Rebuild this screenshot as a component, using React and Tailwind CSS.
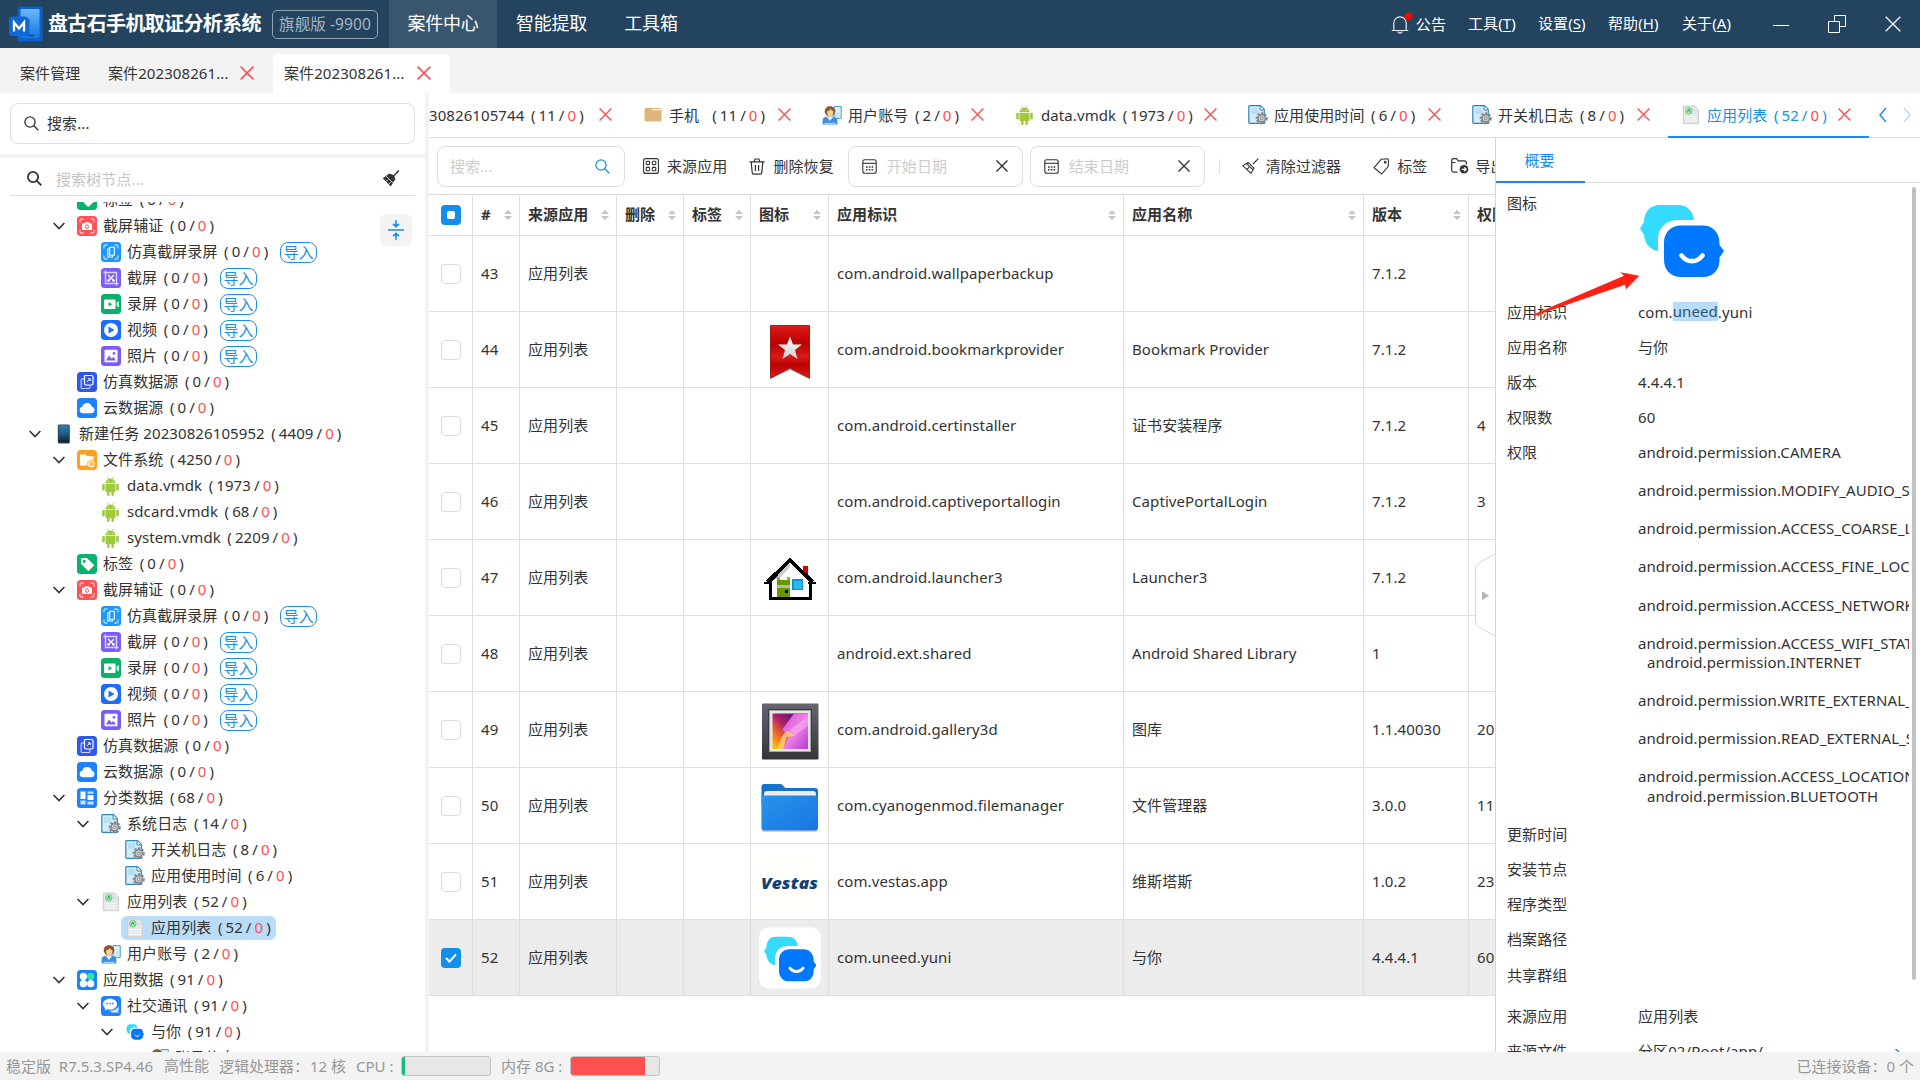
import React from "react";

/* ---------- small glyphs ---------- */

const Cross = ({ className = "", w = 14, h = 14, sw = 1.5 }) => (
  <svg className={"shrink-0 " + className} width={w} height={h} viewBox="0 0 14 14" fill="none" stroke="currentColor" strokeWidth={sw}>
    <path d="M.6.6 13.4 13.4M13.4.6.6 13.4" />
  </svg>
);

const Magnifier = ({ className = "", sw = 1.3 }) => (
  <svg className={"shrink-0 " + className} width="15" height="15" viewBox="0 0 15 15" fill="none" stroke="currentColor" strokeWidth={sw}>
    <circle cx="6" cy="6" r="5.1" />
    <path d="M9.8 9.8 14.3 14.3" />
  </svg>
);

const Chevron = () => (
  <svg className="shrink-0" width="12" height="8" viewBox="0 0 12 8" fill="none" stroke="#333" strokeWidth="1.6">
    <path d="M.6 1 6 6.6 11.4 1" />
  </svg>
);

const Calendar = () => (
  <svg className="shrink-0" width="15" height="15" viewBox="0 0 15 15" fill="none" stroke="#333" strokeWidth="1.1">
    <rect x=".8" y=".8" width="13.4" height="13.4" rx="2" />
    <path d="M.8 4.3H14.2" />
    <path d="M4 8h1.6M6.8 8h1.6M9.6 8h1.6M4 10.8h1.6M6.8 10.8h1.6M9.6 10.8h1.6" strokeWidth="1.5" />
  </svg>
);

const SourceGrid = () => (
  <svg className="shrink-0" width="16" height="16" viewBox="0 0 16 16" fill="none" stroke="#333" strokeWidth="1.1">
    <rect x=".6" y=".6" width="14.8" height="14.8" rx="2" />
    <rect x="3.2" y="3.2" width="3.4" height="3.4" rx=".8" />
    <rect x="9.4" y="3.2" width="3.4" height="3.4" rx=".8" />
    <rect x="3.2" y="9.4" width="3.4" height="3.4" rx=".8" />
    <rect x="9.4" y="9.4" width="3.4" height="3.4" rx=".8" />
  </svg>
);

const Trash = () => (
  <svg className="shrink-0" width="16" height="17" viewBox="0 0 16 17" fill="none" stroke="#333" strokeWidth="1.2">
    <path d="M.5 3.8H15.5M5.2 3.6 6 1h4l.8 2.6M2.2 4l1 10.6a1.6 1.6 0 0 0 1.6 1.5h6.4a1.6 1.6 0 0 0 1.6-1.5l1-10.6M6.4 7v6M9.6 7v6" />
  </svg>
);

const BroomLine = () => (
  <svg className="shrink-0" width="17" height="16" viewBox="0 0 17 16" fill="none" stroke="#333" strokeWidth="1.1">
    <path d="M16.3.6 11 6M6 4.4l6 5.8-3 5L.8 7.8ZM4.4 5.3l6.6 6.6M5.2 11.2 7 9.2" />
  </svg>
);

const TagLine = () => (
  <svg className="shrink-0" width="17" height="17" viewBox="0 0 17 17" fill="none" stroke="#333" strokeWidth="1.1">
    <path d="M8.2 1.3 14 .8c1 0 1.5.6 1.5 1.5l-.3 6.3L8.6 16 1 9.6Z" />
    <circle cx="12.2" cy="4.2" r=".9" />
  </svg>
);

const ExportIcon = () => (
  <svg className="shrink-0" width="18" height="16" viewBox="0 0 18 16" fill="none" stroke="#333" strokeWidth="1.2">
    <path d="M6.5 14.2H2.6A2 2 0 0 1 .7 12.300V2.500A1.800 1.800 0 0 1 2.500.700H5.600L7.200 2.800H13.500A2 2 0 0 1 15.400 4.800V6.600M1 4.500H4.500" />
    <circle cx="13" cy="11.300" r="4.300" fill="#333" stroke="none" />
    <path d="M10.700 11.300h4M13.200 9.400l2 1.900-2 1.900" stroke="#fff" />
  </svg>
);

const Sort = () => (
  <svg className="ml-auto shrink-0" width="8" height="10" viewBox="0 0 8 10" fill="#c4c4c4">
    <path d="M4 0 8 4H0ZM4 10 0 6H8Z" />
  </svg>
);

/* ---------- 20px tree icons ---------- */

const Tile = ({ color, children }) => (
  <svg className="shrink-0" width="20" height="20" viewBox="0 0 20 20" fill="none">
    <rect width="20" height="20" rx="3.5" fill={color} />
    {children}
  </svg>
);

const icons = {
  tag: (
    <Tile color="#08b26a">
      <path d="M4 4.800A.8.800 0 0 1 4.800 4H9.800L16.600 10.600a1 1 0 0 1 0 1.400L12 16.600a1 1 0 0 1-1.400 0L4 9.800Z" fill="#fff" />
      <circle cx="7.300" cy="7.300" r="1.500" fill="#08b26a" />
    </Tile>
  ),
  evidence: (
    <Tile color="#ff5257">
      <path d="M3 6.500V4.500A1.500 1.500 0 0 1 4.500 3H6.500M13.500 3h2A1.500 1.500 0 0 1 17 4.500v2M17 13.500v2a1.500 1.500 0 0 1-1.500 1.500h-2M6.500 17h-2A1.500 1.500 0 0 1 3 15.500v-2" stroke="#ffc2c4" strokeWidth="1.300" />
      <path d="M5 7.500h2.200l1-1.300h3.600l1 1.300H15v6.500H5Z" fill="#fff" />
      <circle cx="10" cy="10.600" r="1.700" stroke="#ff5257" />
    </Tile>
  ),
  simShot: (
    <Tile color="#1e96ff">
      <path d="M3 6.500V4.500A1.500 1.500 0 0 1 4.500 3H6.500M13.500 3h2A1.500 1.500 0 0 1 17 4.500v2M17 13.500v2a1.500 1.500 0 0 1-1.500 1.500h-2M6.500 17h-2A1.500 1.500 0 0 1 3 15.500v-2" stroke="#b5dcff" strokeWidth="1.300" />
      <path d="M8.700 5.200h4.600v8H8.700ZM8.500 7H6.800v8h4.700v-1.500" stroke="#fff" strokeWidth="1.100" />
    </Tile>
  ),
  shot: (
    <Tile color="#7c5cf8">
      <path d="M4.500 2.500v13h13M2.500 4.500h13v13" stroke="#ddd5ff" strokeWidth="1.400" />
      <path d="M7 7l6 6M13 7l-6 6" stroke="#fff" strokeWidth="1.300" />
      <circle cx="7.500" cy="12.500" r="1" stroke="#fff" /><circle cx="12.500" cy="12.500" r="1" stroke="#fff" />
    </Tile>
  ),
  record: (
    <Tile color="#08b26a">
      <rect x="3" y="5.500" width="11.500" height="9.500" rx="1" fill="#fff" />
      <path d="M15.500 8.500 18 7v6.500l-2.500-1.500Z" fill="#c9f2e0" />
      <path d="M7.500 8v4.600l3.700-2.300Z" fill="#08b26a" />
    </Tile>
  ),
  video: (
    <Tile color="#1b6dff">
      <circle cx="10" cy="10" r="7" fill="#fff" />
      <path d="M7.500 6.500v7l6-3.500Z" fill="#1b6dff" />
    </Tile>
  ),
  photo: (
    <Tile color="#7c5cf8">
      <rect x="3.500" y="3.800" width="13" height="12.500" rx="1" fill="#fff" />
      <path d="M5 14.500 8 9.500l2.500 3 2-1.500 2.500 3.500Z" fill="#7c5cf8" />
      <circle cx="13" cy="7.300" r="1.400" fill="#7c5cf8" />
    </Tile>
  ),
  simData: (
    <Tile color="#2f57ee">
      <path d="M8 3.500h6.500a1.500 1.500 0 0 1 1.500 1.500v6.500a1.500 1.500 0 0 1-1.500 1.500H9A1.500 1.500 0 0 1 7.500 11.500V4Z" stroke="#fff" strokeWidth="1.200" />
      <path d="M7 6.800H5.200a1 1 0 0 0-1 1V15.500a1 1 0 0 0 1 1h6.600a1 1 0 0 0 1-1V13" stroke="#c8d3ff" strokeWidth="1.200" />
      <path d="M10 9.800l3-2.800M11 6.800h2.200V9" stroke="#fff" />
    </Tile>
  ),
  cloud: (
    <Tile color="#1c82ff">
      <path d="M5.800 15.300a3.300 3.300 0 0 1-.6-6.500 5 5 0 0 1 9.700 0 3.300 3.300 0 0 1-.6 6.500Z" fill="#fff" />
    </Tile>
  ),
  files: (
    <Tile color="#ffa022">
      <path d="M3 4.500h5.500L10 6.200h6.500V15.500H3Z" fill="#fff" />
      <circle cx="14.300" cy="14" r="3.800" fill="#fff" stroke="#ffa022" strokeWidth=".8" />
      <circle cx="14.300" cy="14" r="1.400" stroke="#ffa022" strokeWidth="1.200" />
    </Tile>
  ),
  category: (
    <Tile color="#1c82ff">
      <path d="M3.500 3.500h5v7.500h-5ZM10.500 7h6v5h-6Z" fill="#fff" />
      <path d="M10.500 3.500h6v2.200h-6ZM3.500 12.500h5v4h-5ZM10.500 13.500h6v3h-6Z" fill="#cbe2ff" />
    </Tile>
  ),
  apps: (
    <Tile color="#1c82ff">
      <circle cx="6.400" cy="6.400" r="3.600" fill="#fff" />
      <circle cx="13.700" cy="6.400" r="3.600" fill="#27e8a4" />
      <circle cx="6.400" cy="13.700" r="3.600" fill="#fff" />
      <circle cx="13.700" cy="13.700" r="3.600" fill="#fff" />
    </Tile>
  ),
  social: (
    <Tile color="#1c82ff">
      <path d="M17.500 10.500c1 3-.3 4-.3 4l.4 2.500-2.500-.8c-3 1.300-6-.2-6.600-1.700 5 .3 7.500-2 9-4Z" fill="#cfe3ff" />
      <path d="M9 2.800c4 0 7 2.300 7 5.400s-3 5.400-7 5.400c-.8 0-1.600-.1-2.300-.3L3.800 14.500l.3-2.600C2.800 11 2 9.700 2 8.200c0-3.100 3-5.400 7-5.400Z" fill="#fff" />
      <path d="M5.300 7.600h1.600M8.200 7.600h1.600M11.100 7.600h1.600" stroke="#1c82ff" strokeWidth="1.500" />
    </Tile>
  ),
  device: (
    <svg className="ml-1 shrink-0" width="20" height="20" viewBox="0 0 20 20">
      <defs>
        <linearGradient id="dev" x1="0" y1="0" x2="0" y2="1">
          <stop offset="0" stopColor="#2d7db5" /><stop offset=".5" stopColor="#1d5a86" /><stop offset="1" stopColor="#12212e" />
        </linearGradient>
      </defs>
      <rect x=".8" y=".5" width="12" height="19" rx="1.500" fill="#3a3d42" />
      <rect x="1.700" y="1.300" width="10.200" height="17" rx=".6" fill="url(#dev)" />
    </svg>
  ),
  android: (
    <svg className="shrink-0" width="20" height="20" viewBox="0 0 20 20" fill="#9fcb3b">
      <path d="M4.500 7.200a5 4.600 0 0 1 10 0ZM4.500 8h10v7.200a.8.800 0 0 1-.8.800H5.300a.8.800 0 0 1-.8-.8Z" />
      <rect x="1.200" y="7.800" width="2.600" height="6.800" rx="1.300" />
      <rect x="15.200" y="7.800" width="2.600" height="6.800" rx="1.300" />
      <rect x="6.100" y="14" width="2.500" height="6" rx="1.200" />
      <rect x="10.400" y="14" width="2.500" height="6" rx="1.200" />
      <path d="M6.200.8 7.600 3.200M12.800.8 11.400 3.200" stroke="#9fcb3b" strokeWidth=".7" />
      <circle cx="7.300" cy="5.200" r=".5" fill="#fff" /><circle cx="11.700" cy="5.200" r=".5" fill="#fff" />
    </svg>
  ),
  syslog: (
    <svg className="shrink-0" width="20" height="20" viewBox="0 0 20 20" fill="none">
      <path d="M.8 1.500Q.8.700 1.600.700H12.500L16.300 4.500V18.300H1.600Q.8 18.300.8 17.500Z" fill="#d5edf9" stroke="#2f86b8" strokeWidth="1.200" />
      <path d="M12 1v4h4" fill="#fff" stroke="#2f86b8" />
      <path d="M3 3h7v6H3Z" fill="#b4dff4" />
      <circle cx="13.700" cy="13.300" r="5" stroke="#858b90" strokeWidth="2.200" strokeDasharray="2.300 1.400" />
      <circle cx="13.700" cy="13.300" r="3.700" fill="#c9cdd0" stroke="#7d8388" strokeWidth="1.400" />
      <circle cx="13.700" cy="13.300" r="1.300" fill="#eee" stroke="#7d8388" />
    </svg>
  ),
  applist: (
    <svg className="shrink-0" width="20" height="20" viewBox="0 0 20 20" fill="none">
      <path d="M2.300 1H13.500l4 4V18.700H2.300Z" fill="#e4e5e6" stroke="#c9cacc" strokeWidth=".9" />
      <path d="M13.300 1v4.200h4.200Z" fill="#fafafa" stroke="#c9cacc" strokeWidth=".6" />
      <circle cx="7.800" cy="5.800" r="3.300" fill="#a5e6b5" stroke="#5ccb78" strokeWidth=".8" />
      <path d="M6.300 7.300 7.800 4l1.500 3.300" stroke="#35ad58" />
      <path d="M4.500 11.500h11M4.500 13.800h11M4.500 16.100h11" stroke="#f8f8f8" />
    </svg>
  ),
  user: (
    <svg className="shrink-0" width="20" height="20" viewBox="0 0 20 20" fill="none">
      <path d="M12 1.500h7.300v12H12Z" fill="#c8e8f7" stroke="#4aa0cc" strokeWidth=".9" />
      <path d="M14 4h4M14 6.500h4" stroke="#fff" />
      <path d="M.6 19.500V15c0-2 2-3.300 4-3.300h6.500c2 0 4.300 1.300 4.300 3.300v4.500Z" fill="#3f8fe0" />
      <path d="M5 12l3 4 3-4Z" fill="#e9f4ff" />
      <path d="M2.500 18.500h11" stroke="#a7d1fa" strokeWidth="1.400" />
      <circle cx="8" cy="6.300" r="5.300" fill="#8b5a26" />
      <path d="M5 6.500C7 6 8 5 8.500 4c1 1.500 2.700 2 3 2.500 0 3-1.300 5.300-3.300 5.300S5 9.500 5 6.500Z" fill="#f6cf9c" />
    </svg>
  ),
  folder: (
    <svg className="shrink-0" width="20" height="20" viewBox="0 0 20 20">
      <path d="M1.500 4.500a1.500 1.500 0 0 1 1.500-1.500H17a1.500 1.500 0 0 1 1.500 1.500V15a1.500 1.500 0 0 1-1.500 1.500H3A1.500 1.500 0 0 1 1.500 15Z" fill="#deb67c" />
      <path d="M9 4h8.500v1.200h-7.500Z" fill="#fff" />
    </svg>
  ),
};

const Bubbles = ({ x, y, width, height, className }) => (
  <svg className={className} x={x} y={y} width={width} height={height} viewBox="0 0 84 72" fill="none">
    <path d="M54 15C53 6 47 0 38 0H20C10 0 4 7 4 17L0 23.500 4 30C5 39 10 45 18 46V34C18 23 26 15 38 15Z" fill="#35dbff" />
    <path d="M24 38C24 27 31 20.500 41 20.500H63C73 20.500 79.500 28 79.500 38V40L84 46 79.500 52.500V55C79.500 65 73 72 63 72H41C31 72 24 65 24 55Z" fill="#0077ff" />
    <path d="M41.500 50.500C47 58 57 58 62.500 50.500" stroke="#fff" strokeWidth="4.600" strokeLinecap="round" />
  </svg>
);

icons.yuni = (
  <span className="flex size-5 shrink-0 items-center justify-center">
    <Bubbles width="18" height="16" />
  </span>
);

/* ---------- app icons shown inside the table ---------- */

const appIcons = {
  bookmark: (
    <svg width="62" height="62" viewBox="0 0 62 62">
      <defs>
        <linearGradient id="bm" x1="0" y1="0" x2="0" y2="1">
          <stop offset="0" stopColor="#df1a17" /><stop offset=".35" stopColor="#b90000" /><stop offset=".6" stopColor="#d81a1a" /><stop offset=".75" stopColor="#b80000" /><stop offset="1" stopColor="#e01c1c" />
        </linearGradient>
        <linearGradient id="bs" x1="0" y1="0" x2="0" y2="1"><stop offset="0" stopColor="#fff" /><stop offset="1" stopColor="#cfcfcf" /></linearGradient>
      </defs>
      <path d="M11 7V60.500L31 51 51 60.500V7Z" fill="#777" opacity=".6" />
      <path d="M11.500 6.500V59L31 49 50.500 59V6.500Z" fill="url(#bm)" stroke="#8a0d0d" strokeWidth=".8" />
      <path d="M31 17.500 34 25.500H43L36 31 38.500 40 31 35 23.500 40 26 31 19 25.500H28Z" fill="url(#bs)" />
    </svg>
  ),
  home: (
    <svg width="62" height="62" viewBox="0 0 62 62" shapeRendering="crispEdges">
      <path d="M11 33 31 14 51 33V52H11Z" fill="#fff" />
      <path d="M12 34V29L28 17H31V20L20 31Z" fill="#ccc" />
      <rect x="44" y="19" width="5" height="9" fill="#d00000" />
      <path d="M31 13.500 51.500 34V51.500H11.500V34Z" fill="none" stroke="#000" strokeWidth="2.600" />
      <path d="M5 36H13M49 36H57M8 34.500 31 12.500 54 34.500" fill="none" stroke="#000" strokeWidth="2.600" />
      <rect x="18" y="33" width="13" height="17" fill="#659800" />
      <path d="M18 30h3v3h-3ZM28 30h3v3h-3Z" fill="#8fbb3d" />
      <rect x="18" y="38" width="13" height="2.500" fill="#b9b9a8" />
      <rect x="26" y="43" width="3" height="3" fill="#000" />
      <rect x="33" y="32" width="11" height="11" fill="#0099d8" />
      <rect x="35" y="34" width="8" height="8" fill="#35b5e5" />
    </svg>
  ),
  gallery: (
    <svg width="62" height="62" viewBox="0 0 62 62">
      <defs>
        <linearGradient id="g1" x1="0" y1="1" x2="1" y2="0">
          <stop offset="0" stopColor="#ffcc00" /><stop offset=".3" stopColor="#e8622d" /><stop offset=".5" stopColor="#b3206a" /><stop offset=".8" stopColor="#5a0f76" />
        </linearGradient>
        <linearGradient id="g2" x1="0" y1="0" x2="1" y2="1">
          <stop offset="0" stopColor="#d04fe0" /><stop offset=".5" stopColor="#ee82e4" /><stop offset="1" stopColor="#b43bd8" />
        </linearGradient>
        <linearGradient id="g3" x1="0" y1="0" x2="0" y2="1"><stop offset="0" stopColor="#65666e" /><stop offset="1" stopColor="#34353b" /></linearGradient>
      </defs>
      <rect x="3" y="4.500" width="56.500" height="56" rx="1" fill="url(#g3)" />
      <rect x="9" y="10" width="44" height="43" fill="#3b3b41" />
      <rect x="10.500" y="11.500" width="41" height="41" fill="#e6e6e6" stroke="#a5a5a5" />
      <rect x="13.500" y="14.500" width="35.500" height="35.500" fill="url(#g1)" />
      <path d="M35 14.500H49V50H24L30 36 23 31Z" fill="url(#g2)" />
      <path d="M18 50C22 40 24 33 29 32L37 37 28 38 24 50Z" fill="#ffd27a" opacity=".8" />
      <path d="M30 32 49 17V27L36 36Z" fill="#ffb3f4" opacity=".5" />
    </svg>
  ),
  folder: (
    <svg width="62" height="62" viewBox="0 0 62 62">
      <defs><linearGradient id="fo" x1="0" y1="0" x2="1" y2="1"><stop offset="0" stopColor="#2793ee" /><stop offset="1" stopColor="#1976df" /></linearGradient></defs>
      <path d="M2.500 54a3 3 0 0 0 3 3H56a3 3 0 0 0 3-3V30H2.500Z" fill="#c9d5e4" />
      <path d="M2.500 12a3 3 0 0 1 3-3H21c2 0 2.500 1 3.500 2.200S26.500 13 28 13H56a3 3 0 0 1 3 3V30H2.500Z" fill="#1574c9" />
      <path d="M5 19a3 3 0 0 1 3-3H54a3 3 0 0 1 3 3v4H5Z" fill="#ececea" />
      <path d="M2.500 20.500H59V52.500a3 3 0 0 1-3 3H5.500a3 3 0 0 1-3-3Z" fill="url(#fo)" />
    </svg>
  ),
  vestas: (
    <svg width="62" height="62" viewBox="0 0 62 62">
      <rect width="62" height="62" fill="#fffffb" />
      <text x="2" y="37.500" fontFamily="'Open Sans','Noto Sans',sans-serif" fontStyle="italic" fontWeight="800" fontSize="15" textLength="57" lengthAdjust="spacingAndGlyphs" fill="#0f4076">Vestas</text>
    </svg>
  ),
  yuni: (
    <svg width="62" height="62" viewBox="0 0 62 62">
      <rect width="62" height="61" y=".5" rx="10" fill="#fff" />
      <Bubbles x="5" y="9.500" width="52.500" height="45" />
    </svg>
  ),
};

/* ---------- data ---------- */

const importKids = [
  { lv: 2, icon: "simShot", name: "仿真截屏录屏", n: "0", imp: true },
  { lv: 2, icon: "shot", name: "截屏", n: "0", imp: true },
  { lv: 2, icon: "record", name: "录屏", n: "0", imp: true },
  { lv: 2, icon: "video", name: "视频", n: "0", imp: true },
  { lv: 2, icon: "photo", name: "照片", n: "0", imp: true },
  { lv: 1, icon: "simData", name: "仿真数据源", n: "0" },
  { lv: 1, icon: "cloud", name: "云数据源", n: "0" },
];

const tree = [
  { lv: 1, icon: "tag", name: "标签", n: "0" },
  { lv: 1, icon: "evidence", name: "截屏辅证", n: "0", open: true },
  ...importKids,
  { lv: 0, icon: "device", name: "新建任务 20230826105952", n: "4409", open: true },
  { lv: 1, icon: "files", name: "文件系统", n: "4250", open: true },
  { lv: 2, icon: "android", name: "data.vmdk", n: "1973" },
  { lv: 2, icon: "android", name: "sdcard.vmdk", n: "68" },
  { lv: 2, icon: "android", name: "system.vmdk", n: "2209" },
  { lv: 1, icon: "tag", name: "标签", n: "0" },
  { lv: 1, icon: "evidence", name: "截屏辅证", n: "0", open: true },
  ...importKids,
  { lv: 1, icon: "category", name: "分类数据", n: "68", open: true },
  { lv: 2, icon: "syslog", name: "系统日志", n: "14", open: true },
  { lv: 3, icon: "syslog", name: "开关机日志", n: "8" },
  { lv: 3, icon: "syslog", name: "应用使用时间", n: "6" },
  { lv: 2, icon: "applist", name: "应用列表", n: "52", open: true },
  { lv: 3, icon: "applist", name: "应用列表", n: "52", selected: true },
  { lv: 2, icon: "user", name: "用户账号", n: "2" },
  { lv: 1, icon: "apps", name: "应用数据", n: "91", open: true },
  { lv: 2, icon: "social", name: "社交通讯", n: "91", open: true },
  { lv: 3, icon: "yuni", name: "与你", n: "91", open: true },
  { lv: 4, icon: "user", name: "账号信息", n: "1" },
];

const indents = ["pl-[29px]", "pl-[53px]", "pl-[77px]", "pl-[101px]", "pl-[125px]"];

const docTabs = [
  { w: "w-[201px]", name: "30826105744", n: "11" },
  { w: "w-[179px]", icon: "folder", name: "手机", n: "11", wide: true },
  { w: "w-[193px]", icon: "user", name: "用户账号", n: "2" },
  { w: "w-[233px]", icon: "android", name: "data.vmdk", n: "1973" },
  { w: "w-[224px]", icon: "syslog", name: "应用使用时间", n: "6" },
  { w: "w-[209px]", icon: "syslog", name: "开关机日志", n: "8" },
  { w: "w-[201px]", icon: "applist", name: "应用列表", n: "52", active: true },
];

const columns = [
  ["w-[47px]", "#"],
  ["w-[97px]", "来源应用"],
  ["w-[67px]", "删除"],
  ["w-[67px]", "标签"],
  ["w-[78px]", "图标"],
  ["w-[295px]", "应用标识"],
  ["w-[240px]", "应用名称"],
  ["w-[105px]", "版本"],
  ["w-[105px]", "权限数"],
];

const rows = [
  ["43", null, "com.android.wallpaperbackup", "", "7.1.2", ""],
  ["44", "bookmark", "com.android.bookmarkprovider", "Bookmark Provider", "7.1.2", ""],
  ["45", null, "com.android.certinstaller", "证书安装程序", "7.1.2", "4"],
  ["46", null, "com.android.captiveportallogin", "CaptivePortalLogin", "7.1.2", "3"],
  ["47", "home", "com.android.launcher3", "Launcher3", "7.1.2", ""],
  ["48", null, "android.ext.shared", "Android Shared Library", "1", ""],
  ["49", "gallery", "com.android.gallery3d", "图库", "1.1.40030", "20"],
  ["50", "folder", "com.cyanogenmod.filemanager", "文件管理器", "3.0.0", "11"],
  ["51", "vestas", "com.vestas.app", "维斯塔斯", "1.0.2", "23"],
  ["52", "yuni", "com.uneed.yuni", "与你", "4.4.4.1", "60"],
];

const permissions = [
  "android.permission.CAMERA", "",
  "android.permission.MODIFY_AUDIO_SETTINGS", "",
  "android.permission.ACCESS_COARSE_LOCATION", "",
  "android.permission.ACCESS_FINE_LOCATION", "",
  "android.permission.ACCESS_NETWORK_STATE", "",
  "android.permission.ACCESS_WIFI_STATE",
  ">android.permission.INTERNET", "",
  "android.permission.WRITE_EXTERNAL_STORAGE", "",
  "android.permission.READ_EXTERNAL_STORAGE", "",
  "android.permission.ACCESS_LOCATION_EXTRA",
  ">android.permission.BLUETOOTH",
];

/* ---------- pieces ---------- */

const Count = ({ n, wide, className = "" }) => (
  <span className={"flex " + (wide ? "ml-[13px] " : "ml-[6.5px] ") + className}>
    <span className="mr-[3px]">(</span>
    <span>{n}</span>
    <span className="mx-[3px]">/</span>
    <span className="text-[#ff4d4f]">0</span>
    <span className="ml-[3px]">)</span>
  </span>
);

const TreeRow = ({ r }) => (
  <div className={"flex h-[26px] shrink-0 items-center " + indents[r.lv]}>
    <span className="flex w-3 shrink-0">{r.open && <Chevron />}</span>
    <div className={"ml-2 flex h-6 items-center rounded-md pr-[5px] pl-1 " + (r.selected ? "bg-[#b9ddf9]" : "")}>
      {icons[r.icon]}
      <span className={(r.lv === 0 ? "ml-[2px]" : "ml-1.5") + " mb-0.5"}>{r.name}</span>
      <Count n={r.n} className="mb-0.5" />
      {r.imp && (
        <span className="ml-3 flex h-[21px] w-[37px] items-center justify-center rounded-lg border border-[#1890e8] pb-px tracking-normal text-[#1890e8]">导入</span>
      )}
    </div>
  </div>
);

const Box = ({ on }) =>
  on ? (
    <span className="flex size-5 items-center justify-center rounded bg-[#128fea]">
      <svg width="12" height="10" viewBox="0 0 12 10" fill="none" stroke="#fff" strokeWidth="2">
        <path d="M1 5 4.500 8.500 11 1.300" />
      </svg>
    </span>
  ) : (
    <span className="size-5 rounded border border-[#dcdcdc]" />
  );

const DateBox = ({ label, className }) => (
  <div className={"flex h-[41px] w-[175px] shrink-0 items-center rounded-lg border border-[#dedede] pr-[14px] pl-[13px] " + className}>
    <Calendar />
    <span className="ml-2.5 text-[#ccc]">{label}</span>
    <Cross className="ml-auto text-[#333]" w={12} h={12} sw={1.6} />
  </div>
);

const Detail = ({ label, value, className = "" }) => (
  <div className={"flex h-[35.1px] shrink-0 items-center pb-0.5 " + className}>
    <span className="w-[131px] shrink-0">{label}</span>
    <span>{value}</span>
  </div>
);

const MenuItem = ({ name, k, className }) => (
  <span className={"mb-0.5 " + className}>
    {name}(<span className="underline underline-offset-2">{k}</span>)
  </span>
);

/* ---------- page ---------- */

export default function App() {
  return (
    <div className="flex h-[1080px] w-[1920px] flex-col overflow-hidden bg-white font-['Noto_Sans','Noto_Sans_CJK_SC',sans-serif] text-[15px] leading-[22px] tracking-[0.09px] whitespace-nowrap text-[#333]">
      <header className="flex h-12 shrink-0 items-center bg-[#23435f] text-white">
        <svg className="ml-[9px] shrink-0" width="34" height="36" viewBox="0 0 34 36">
          <defs>
            <linearGradient id="lg" x1="0" y1="0" x2="0" y2="1"><stop offset="0" stopColor="#6db7ff" /><stop offset="1" stopColor="#1178dc" /></linearGradient>
          </defs>
          <rect x="8.500" y=".5" width="25" height="35" rx="2.500" fill="#0c62c8" />
          <rect x="11.500" y="3" width="19" height="29" rx="1" fill="url(#lg)" />
          <path d="M3 10.500H17L20.500 14V27a3 3 0 0 1-3 3H3a3 3 0 0 1-3-3V13.500a3 3 0 0 1 3-3Z" fill="#0f68d4" />
          <path d="M5 25.500V16.500L10 22.500 15 16.500V25.500" fill="none" stroke="#fff" strokeWidth="2.300" />
          <path d="M19 29.500h6" stroke="#0c4f9e" strokeWidth="1.500" />
        </svg>
        <span className="ml-[5px] w-[214px] text-[20px] leading-7 font-bold tracking-[-0.65px]">盘古石手机取证分析系统</span>
        <span className="ml-[10px] flex h-[29px] w-[106px] items-center justify-center rounded-[5px] border border-[#93a3b1] text-[15.5px] text-[#a8b5c0]">旗舰版 -9900</span>
        <nav className="ml-[11px] flex h-full items-center text-[18px] tracking-[-0.2px]">
          <span className="flex h-full w-[108px] items-center justify-center bg-[#3a566f] pb-0.5">案件中心</span>
          <span className="flex h-full w-[109px] items-center justify-center pb-0.5">智能提取</span>
          <span className="flex h-full w-[90px] items-center justify-center pb-0.5">工具箱</span>
        </nav>
        <div className="ml-auto flex h-full items-center">
          <svg width="22" height="24" viewBox="0 0 22 24" fill="none" stroke="#e5eaee" strokeWidth="1.200">
            <path d="M.8 18.500H17.200M2.800 18.300V11a6.200 6.200 0 0 1 12.400 0v7.300M6.800 19.500a2.300 2.300 0 0 0 4.400 0" />
            <circle cx="17.500" cy="4.500" r="4" fill="#f00" stroke="none" />
          </svg>
          <span className="ml-[3px]">公告</span>
          <MenuItem className="ml-[22px] w-12" name="工具" k="T" />
          <MenuItem className="ml-[22px] w-12" name="设置" k="S" />
          <MenuItem className="ml-[22px] w-[52px]" name="帮助" k="H" />
          <MenuItem className="ml-[22px] w-[51px]" name="关于" k="A" />
          <span className="mt-0.5 ml-10 h-px w-4 bg-white" />
          <svg className="ml-[39px]" width="18" height="18" viewBox="0 0 18 18" fill="none" stroke="#fff">
            <path d="M.5 6.500h11v11H.5ZM6.500 6.500V.5h11v11h-6" />
          </svg>
          <Cross className="mr-[19px] ml-[39px]" w={16} h={16} sw={1.1} />
        </div>
      </header>

      <div className="flex h-[45px] shrink-0 items-end bg-[#f3f3f3]">
        <span className="flex h-[39px] w-[108px] items-center pb-px pl-5">案件管理</span>
        <span className="flex h-[39px] w-[165px] items-center pb-px">
          案件202308261...<Cross className="mr-[19px] ml-auto text-[#ff4d4f]" />
        </span>
        <span className="flex h-[39px] w-[177px] items-center rounded-t bg-white pb-px pl-[11px]">
          案件202308261...<Cross className="mr-[19px] ml-auto text-[#ff4d4f]" />
        </span>
      </div>

      <main className="flex h-[959px] shrink-0">
        <aside className="relative flex w-[425px] shrink-0 flex-col">
          <div className="mx-[10px] mt-[10px] flex h-[41px] shrink-0 items-center rounded-lg border border-[#dedede] pl-[13px]">
            <Magnifier />
            <span className="mb-0.5 ml-2">搜索...</span>
          </div>
          <div className="mt-[10px] h-1 shrink-0 bg-[#f3f3f3]" />
          <div className="mx-[10px] flex h-[38px] shrink-0 items-center border-b border-[#dedede] pt-1 pl-[17px]">
            <Magnifier sw={1.8} />
            <span className="ml-[14px] text-[#c4c4c4]">搜索树节点...</span>
            <svg className="mr-[15px] ml-auto" width="18" height="17" viewBox="0 0 18 17">
              <path d="M16.800.6 11.500 6.200" stroke="#333" strokeWidth="1.500" />
              <path d="M7 3.800c2.500-.8 6.500 2.600 6.200 5.400L8.800 16.500.8 8.200Z" fill="#333" />
              <path d="M4 5.800 10.800 12.800M4 11.500l2-2M6.800 14l2-2" stroke="#fff" strokeWidth=".8" />
            </svg>
          </div>
          <div className="mt-1.5 flex min-h-0 flex-1 flex-col justify-start overflow-hidden">
            <div className="-mt-[15px] flex flex-col">
              {tree.map((r, i) => (
                <TreeRow key={i} r={r} />
              ))}
            </div>
          </div>
          <button className="absolute top-[121px] right-[13px] flex size-8 items-center justify-center rounded-md bg-[#f3f3f3]">
            <svg width="16" height="20" viewBox="0 0 16 20" fill="none" stroke="#1890e8" strokeWidth="1.700">
              <path d="M0 10H16M8 .3V6M5 3.800 8 6.600 11 3.800M8 19.700V14M5 16.200 8 13.400 11 16.200" />
            </svg>
          </button>
        </aside>
        <div className="w-1 shrink-0 bg-[#f3f3f3]" />

        <section className="flex min-w-0 flex-1 flex-col">
          <div className="flex h-[45px] shrink-0 border-b border-[#dedede]">
            {docTabs.map((t, i) => (
              <div key={i} className={"-mb-px flex shrink-0 items-center " + t.w + (t.icon ? " pl-[13px] " : " ") + (t.active ? "border-b-2 border-[#128fea] text-[#128fea]" : "border-b-2 border-transparent")}>
                {t.icon && <span className="mr-1.5">{icons[t.icon]}</span>}
                <span>{t.name}</span>
                <Count n={t.n} wide={t.wide} />
                <Cross className="mr-[18.5px] ml-auto text-[#ff4d4f]" w={13} h={13} />
              </div>
            ))}
            <svg className="mt-[14px] ml-[9px]" width="34" height="16" viewBox="0 0 34 16" fill="none" strokeWidth="1.500">
              <path d="M8 1 2 8 8 15" stroke="#1890e8" />
              <path d="M26 1 32 8 26 15" stroke="#b9dcf7" />
            </svg>
          </div>

          <div className="flex min-h-0 flex-1">
            <div className="relative flex w-[1066px] shrink-0 flex-col overflow-hidden">
              <div className="flex h-14 shrink-0 items-center pl-2">
                <div className="flex h-[41px] w-[188px] shrink-0 items-center rounded-lg border border-[#dedede] pr-[14px] pl-3">
                  <span className="text-[#ccc]">搜索...</span>
                  <Magnifier className="ml-auto text-[#1890e8]" />
                </div>
                <span className="ml-[18px] flex items-center gap-2"><SourceGrid />来源应用</span>
                <span className="ml-[22px] flex items-center gap-2"><Trash />删除恢复</span>
                <DateBox className="ml-[14px]" label="开始日期" />
                <DateBox className="ml-[7px]" label="结束日期" />
                <span className="ml-[14px] h-[15px] w-px shrink-0 bg-[#dedede]" />
                <span className="ml-[22px] flex shrink-0 items-center gap-[7px]"><BroomLine />清除过滤器</span>
                <span className="ml-8 flex shrink-0 items-center gap-[7px]"><TagLine />标签</span>
                <span className="ml-6 flex shrink-0 items-center gap-1.5"><ExportIcon />导出</span>
              </div>

              <div className="flex w-[1150px] shrink-0 flex-col">
                <div className="flex h-[42px] border-y border-[#dedede] font-bold">
                  <span className="flex w-11 shrink-0 items-center border-r border-[#dedede] pl-3">
                    <span className="flex size-5 items-center justify-center rounded bg-[#128fea]">
                      <span className="size-2 rounded-[2px] bg-white" />
                    </span>
                  </span>
                  {columns.map(([w, name], i) => (
                    <span key={i} className={"flex shrink-0 items-center border-r border-[#dedede] pr-[7px] pl-2 " + w}>
                      <span className="mb-0.5">{name}</span>
                      <Sort />
                    </span>
                  ))}
                </div>
                {rows.map((r) => {
                  const on = r[0] === "52";
                  const cells = [r[0], "应用列表", "", "", r[1] && appIcons[r[1]], r[2], r[3], r[4], r[5]];
                  return (
                    <div key={r[0]} className={"flex h-[76px] border-b border-[#dedede] " + (on ? "bg-[#ececec]" : "")}>
                      <span className="flex w-11 shrink-0 items-center border-r border-[#dedede] pl-3">
                        <Box on={on} />
                      </span>
                      {cells.map((c, i) => (
                        <span key={i} className={"flex shrink-0 items-center border-r border-[#dedede] pl-2 " + columns[i][0] + (i === 4 ? "" : " pb-0.5")}>
                          {c}
                        </span>
                      ))}
                    </div>
                  );
                })}
              </div>

              <svg className="absolute top-[415px] right-0" width="20" height="84" viewBox="0 0 20 84">
                <path d="M20 1 4.500 9.500Q.5 11.500.5 16V68Q.5 72.500 4.500 74.500L20 83" fill="#fff" stroke="#d8d8d8" />
                <path d="M7 38.200v9L14 42.700Z" fill="#b5b5b5" />
              </svg>
            </div>

            <div className="relative flex min-w-0 flex-1 flex-col overflow-hidden border-l border-[#d5d5d5]">
              <div className="flex h-[45px] shrink-0 border-b border-[#dedede]">
                <span className="-mb-px flex w-[89px] items-center justify-center border-b-2 border-[#128fea] pr-0.5 text-[#128fea]">概要</span>
              </div>
              <div className="flex flex-col overflow-hidden pl-[11px]">
                <div className="flex h-[112px] shrink-0">
                  <span className="mt-[9px] w-[131px]">图标</span>
                  <Bubbles className="mt-[22px] ml-0.5" width="84" height="72" />
                </div>
                <div className="flex h-[35.100px] shrink-0 items-center pb-0.5">
                  <span className="w-[131px] shrink-0">应用标识</span>
                  <span>com.</span>
                  <span className="bg-[#b9ddf9] leading-[19px] text-[#2b5575]">uneed</span>
                  <span>.yuni</span>
                </div>
                <Detail label="应用名称" value="与你" />
                <Detail label="版本" value="4.4.4.1" />
                <Detail label="权限数" value="60" />
                <div className="mt-[7.500px] flex shrink-0">
                  <span className="w-[131px] shrink-0 leading-[19.100px]">权限</span>
                  <div className="flex w-[271px] flex-col overflow-hidden">
                    {permissions.map((p, i) =>
                      p[0] === ">" ? (
                        <span key={i} className="h-[19.100px] pl-[9px] leading-[19.100px]">{p.slice(1)}</span>
                      ) : (
                        <span key={i} className="h-[19.100px] leading-[19.100px]">{p}</span>
                      )
                    )}
                  </div>
                </div>
                <Detail className="mt-3" label="更新时间" />
                <Detail label="安装节点" />
                <Detail label="程序类型" />
                <Detail label="档案路径" />
                <Detail label="共享群组" />
                <Detail className="mt-1.5" label="来源应用" value="应用列表" />
                <Detail label="来源文件" value="分区02/Root/app/" />
              </div>
              <span className="absolute top-[49px] right-1 h-[793px] w-1 rounded-sm bg-[#c1c1c1]" />
              <svg className="absolute top-[134px] left-[36px]" width="108" height="46" viewBox="0 0 108 46">
                <path d="M107.300 3.700 88.300.2 92 3.700 1.300 42.500 2.300 44 93 12.700 94 17.300Z" fill="#ff2114" />
              </svg>
              <svg className="absolute right-[20px] bottom-0" width="5" height="3" viewBox="0 0 5 3">
                <path d="M.5 0 4 3" stroke="#1890e8" strokeWidth="1.500" />
              </svg>
            </div>
          </div>
        </section>
      </main>

      <footer className="flex h-7 shrink-0 items-center bg-[#f3f3f3] tracking-normal text-[#979797]">
        <span className="w-[158px] pl-1.5">稳定版&nbsp; R7.5.3.SP4.46</span>
        <span className="mb-0.5 ml-1.5 w-[45px]">高性能</span>
        <span className="ml-[10px] w-[91px]">逻辑处理器：</span>
        <span className="w-[46px]">12 核</span>
        <span className="w-[45px]">CPU :</span>
        <span className="flex h-5 w-[90px] overflow-hidden rounded-[3px] border border-[#c4c4c4] bg-[#e7e7e7]">
          <span className="w-[3px] bg-[#10c078]" />
        </span>
        <span className="ml-[10px] w-[69px]">内存 8G :</span>
        <span className="flex h-5 w-[90px] overflow-hidden rounded-[3px] border border-[#c4c4c4] bg-[#e7e7e7]">
          <span className="w-[74px] bg-[#ff5050]" />
        </span>
        <span className="mr-1.5 ml-auto">已连接设备：0 个</span>
      </footer>
    </div>
  );
}
